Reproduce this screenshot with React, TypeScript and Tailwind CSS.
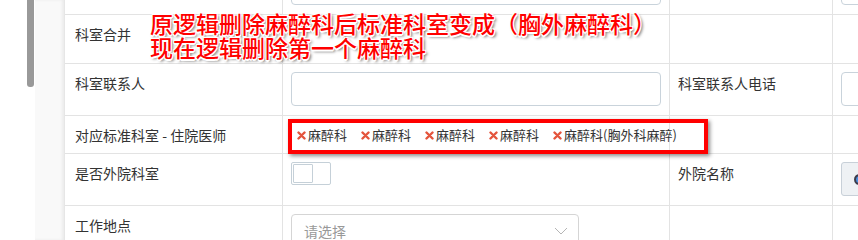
import React from 'react';

const tags = ['麻醉科', '麻醉科', '麻醉科', '麻醉科', '麻醉科(胸外科麻醉)'];

const cell = 'border-b border-r border-[#e3e3e3] overflow-hidden';
const label = 'pl-[10px] pt-[9px] text-[14px] leading-[20px] text-[#333]';
const label3 = 'pl-[8px] pt-[9px] text-[14px] leading-[20px] text-[#333]';
const input = 'h-[34px] rounded-[4px] border border-[#c9d3db] bg-white';

function RemoveIcon() {
  return (
    <svg width="9" height="9" viewBox="0 0 9 9" className="shrink-0">
      <path d="M1.5 1.5 L7.5 7.5 M7.5 1.5 L1.5 7.5" stroke="#e4543c" strokeWidth="2.4" strokeLinecap="round" />
    </svg>
  );
}

function FormTable() {
  return (
    <div className="grid flex-1 grid-cols-[218px_387px_163px_1fr] grid-rows-[15px_49px_52px_38px_52px_52px]">
      {/* row cut off at the top */}
      <div className={cell}></div>
      <div className={`${cell} pl-[8px]`}>
        <div className={`${input} -mt-[29px] w-[370px]`}></div>
      </div>
      <div className={cell}></div>
      <div className={`${cell} border-r-0 pl-[8px]`}>
        <div className={`${input} -mt-[29px] w-[60px]`}></div>
      </div>

      <div className={`${cell} ${label}`}>科室合并</div>
      <div className={cell}></div>
      <div className={cell}></div>
      <div className={`${cell} border-r-0`}></div>

      <div className={`${cell} ${label}`}>科室联系人</div>
      <div className={`${cell} pl-[8px] pt-[8px]`}>
        <div className={`${input} w-[370px]`}></div>
      </div>
      <div className={`${cell} ${label3}`}>科室联系人电话</div>
      <div className={`${cell} border-r-0 pl-[8px] pt-[8px]`}>
        <div className={`${input} w-[60px]`}></div>
      </div>

      <div className={`${cell} ${label}`}>对应标准科室 - 住院医师</div>
      <div className={`${cell} overflow-visible pl-[14px] pt-[10px]`}>
        <div className="flex gap-[14px] whitespace-nowrap text-[13px] leading-[18px] text-[#333]">
          {tags.map((t, i) => (
            <span key={i} className="flex items-center gap-[2px]">
              <RemoveIcon />
              {t}
            </span>
          ))}
        </div>
      </div>
      <div className={cell}></div>
      <div className={`${cell} border-r-0`}></div>

      <div className={`${cell} ${label}`}>是否外院科室</div>
      <div className={`${cell} pl-[8px] pt-[8px]`}>
        <div className="flex h-[23px] w-[40px] items-center rounded-[2px] border border-[#c5d0d8] bg-white pl-[1px]">
          <div className="h-[19px] w-[20px] rounded-[1px] border border-[#c5d0d8] bg-white"></div>
        </div>
      </div>
      <div className={`${cell} ${label3}`}>外院名称</div>
      <div className={`${cell} border-r-0 pl-[8px] pt-[8px]`}>
        <div className="flex h-[34px] w-[60px] items-center rounded-l-[3px] border border-[#c8d0d8] bg-[#eef1f4] pl-[12px]">
          <div className="h-[11px] w-[11px] rounded-full border-2 border-[#3b3b4a] bg-[#4a90e2]"></div>
        </div>
      </div>

      <div className={`${cell} ${label}`}>工作地点</div>
      <div className={`${cell} pl-[8px] pt-[8px]`}>
        <div className="flex h-[34px] w-[288px] items-center justify-between rounded-[4px] border border-[#d5d5d5] bg-white pl-[12px] pr-[10px] text-[14px] text-[#999]">
          <span>请选择</span>
          <svg width="14" height="8" viewBox="0 0 14 8">
            <path d="M1 1 L7 7 L13 1" fill="none" stroke="#b5b5b5" strokeWidth="1" />
          </svg>
        </div>
      </div>
      <div className={cell}></div>
      <div className={`${cell} border-r-0`}></div>
    </div>
  );
}

export default function App() {
  return (
    <div className="relative flex h-[240px] w-[858px] overflow-hidden bg-white font-['Noto_Sans_CJK_SC','Noto_Sans',sans-serif]">
      <div className="w-[35px] shrink-0">
        <div className="ml-[27px] h-[87px] w-[7px] rounded-b-[3px] bg-[#999]"></div>
      </div>
      <div className="w-[30px] shrink-0 border-r border-[#e6e6e6] bg-[#f9f9f9] shadow-[inset_-2px_0_3px_rgba(0,0,0,0.06)]"></div>
      <FormTable />

      {/* annotation overlay */}
      <div className="absolute left-[150px] top-[11px] whitespace-nowrap text-[23px] font-medium leading-[24px] text-[#ff0000] [text-shadow:-1px_-1px_0_#fff,1px_-1px_0_#fff,-1px_1px_0_#fff,1px_1px_0_#fff,0_2px_0_#fff,2px_2px_3px_#555]">
        <div>原逻辑删除麻醉科后标准科室变成（胸外麻醉科）</div>
        <div>现在逻辑删除第一个麻醉科</div>
      </div>
      <div className="pointer-events-none absolute left-[288px] top-[119px] h-[35px] w-[420px] border-4 border-[#ff0000] shadow-[2px_2px_4px_rgba(0,0,0,0.45)]"></div>
    </div>
  );
}
